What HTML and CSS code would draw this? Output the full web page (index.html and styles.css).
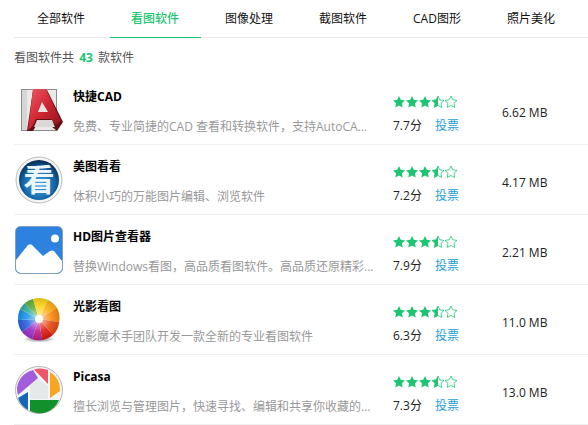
FILE: index.html
```html
<!DOCTYPE html>
<html lang="zh">
<head>
<meta charset="utf-8">
<title>看图软件</title>
<link rel="stylesheet" href="styles.css">
</head>
<body>
<svg class="defs" width="0" height="0" aria-hidden="true">
  <defs>
    <path id="star" d="M6 0l1.800 3.800 4.200.6-3 2.900.7 4.100L6 9.500l-3.700 1.900.7-4.100-3-2.900 4.200-.6z"/>
    <g id="stars">
      <use href="#star" x="0" fill="#1dc573"/>
      <use href="#star" x="13" fill="#1dc573"/>
      <use href="#star" x="26" fill="#1dc573"/>
      <use href="#star" x="39" fill="#fff" stroke="#1dc573" stroke-width=".8"/>
      <path d="M45 0v9.500l-3.700 1.900.7-4.100-3-2.900 4.200-.6z" fill="#1dc573"/>
      <use href="#star" x="52" fill="#fff" stroke="#1dc573" stroke-width=".8"/>
    </g>
  </defs>
</svg>
<nav class="tabs">
  <a class="tab">全部软件</a>
  <a class="tab active">看图软件</a>
  <a class="tab">图像处理</a>
  <a class="tab">截图软件</a>
  <a class="tab">CAD图形</a>
  <a class="tab">照片美化</a>
</nav>
<p class="count">看图软件共 <b>43</b> 款软件</p>
<ul class="list">
  <li class="row">
    <svg class="icon" viewBox="0 0 48 48">
      <defs>
        <linearGradient id="cadRed" x1="0" y1="0" x2="1" y2="1"><stop offset="0" stop-color="#ee5a66"/><stop offset=".5" stop-color="#cf2430"/><stop offset="1" stop-color="#8a121a"/></linearGradient>
      </defs>
      <rect x="6.500" y="3.500" width="35" height="41" fill="#e9e9e9" stroke="#8d8d8d"/>
      <rect x="7" y="4" width="5" height="40" fill="#d6d6d6"/>
      <path d="M18 4h14l16 32-6 9-6-5H21l-3 5h-6z" fill="#5e1116"/>
      <path d="M18 3h13l15 32-5 4-5-6H21l-4 8-4 3z" fill="url(#cadRed)"/>
      <path d="M27 16l6 10H23z" fill="#e8e4e4"/>
      <path d="M22 34h15l3 7H19z" fill="#dcd8d8"/>
    </svg>
    <div class="info">
      <h3 class="name">快捷CAD</h3>
      <p class="desc">免费、专业简捷的CAD 查看和转换软件，支持AutoCA...</p>
    </div>
    <div class="score">
      <svg class="stars" viewBox="0 0 64 12"><use href="#stars"/></svg>
      <div class="meta"><span class="num">7.7分</span><a class="vote">投票</a></div>
    </div>
    <div class="size">6.62 MB</div>
  </li>
  <li class="row">
    <svg class="icon" viewBox="0 0 48 48">
      <defs>
        <radialGradient id="mtBlue" cx=".5" cy=".6" r=".6"><stop offset="0" stop-color="#4aa8e4"/><stop offset=".65" stop-color="#1468aa"/><stop offset="1" stop-color="#08294f"/></radialGradient>
      </defs>
      <circle cx="24" cy="24" r="23" fill="#f4f4f4" stroke="#bdbdbd"/>
      <circle cx="24" cy="24" r="20" fill="url(#mtBlue)"/>
      <text class="kan" x="24" y="35" text-anchor="middle">看</text>
    </svg>
    <div class="info">
      <h3 class="name">美图看看</h3>
      <p class="desc">体积小巧的万能图片编辑、浏览软件</p>
    </div>
    <div class="score">
      <svg class="stars" viewBox="0 0 64 12"><use href="#stars"/></svg>
      <div class="meta"><span class="num">7.2分</span><a class="vote">投票</a></div>
    </div>
    <div class="size">4.17 MB</div>
  </li>
  <li class="row">
    <svg class="icon" viewBox="0 0 48 48">
      <rect x=".5" y=".5" width="47" height="47" rx="5" fill="#2c82de" stroke="#7f9fc0"/>
      <path d="M1 34L13 19q2-1.500 4 0l11 11 7-5q2-1 4 0l8 10v7a5 5 0 0 1-5 5H6a5 5 0 0 1-5-5z" fill="#fff"/>
      <circle cx="40" cy="12.500" r="4" fill="#fff"/>
    </svg>
    <div class="info">
      <h3 class="name">HD图片查看器</h3>
      <p class="desc">替换Windows看图，高品质看图软件。高品质还原精彩...</p>
    </div>
    <div class="score">
      <svg class="stars" viewBox="0 0 64 12"><use href="#stars"/></svg>
      <div class="meta"><span class="num">7.9分</span><a class="vote">投票</a></div>
    </div>
    <div class="size">2.21 MB</div>
  </li>
  <li class="row">
    <svg class="icon" viewBox="0 0 48 48">
      <defs>
        <radialGradient id="gs" cx=".5" cy=".5" r=".5"><stop offset="0" stop-color="#666"/><stop offset="1" stop-color="#fff"/></radialGradient>
        <radialGradient id="gloss" cx=".5" cy=".5" r=".5"><stop offset=".15" stop-color="#fff" stop-opacity=".55"/><stop offset=".6" stop-color="#fff" stop-opacity=".1"/><stop offset="1" stop-color="#000" stop-opacity=".12"/></radialGradient>
      </defs>
      <ellipse cx="24" cy="43" rx="16" ry="3.500" fill="url(#gs)"/>
      <path d="M24 23L10 7a21 21 0 0 1 8-4z" fill="#5fb03a"/>
      <path d="M24 23L18 3a21 21 0 0 1 15 1z" fill="#fbd319"/>
      <path d="M24 23l9-19a21 21 0 0 1 9 8z" fill="#fcae13"/>
      <path d="M24 23l18-11a21 21 0 0 1 2 14z" fill="#f9860c"/>
      <path d="M24 23l20 3a21 21 0 0 1-6 13z" fill="#e8470f"/>
      <path d="M24 23l14 16a21 21 0 0 1-11 5z" fill="#d81a10"/>
      <path d="M24 23l3 21a21 21 0 0 1-10-1z" fill="#bd1e8c"/>
      <path d="M24 23L17 43a21 21 0 0 1-10-7z" fill="#9a30cc"/>
      <path d="M24 23L7 36a21 21 0 0 1-4-12z" fill="#2a60e0"/>
      <path d="M24 23L3 24a21 21 0 0 1 2-11z" fill="#1a94ea"/>
      <path d="M24 23L5 13a21 21 0 0 1 5-6z" fill="#3cb0a0"/>
      <circle cx="24" cy="23" r="21" fill="url(#gloss)"/>
      <circle cx="24" cy="23" r="4" fill="#fff"/>
    </svg>
    <div class="info">
      <h3 class="name">光影看图</h3>
      <p class="desc">光影魔术手团队开发一款全新的专业看图软件</p>
    </div>
    <div class="score">
      <svg class="stars" viewBox="0 0 64 12"><use href="#stars"/></svg>
      <div class="meta"><span class="num">6.3分</span><a class="vote">投票</a></div>
    </div>
    <div class="size">11.0 MB</div>
  </li>
  <li class="row">
    <svg class="icon" viewBox="0 0 48 48">
      <circle cx="24" cy="24" r="23.500" fill="#f6f6f6" stroke="#b5b5b5"/>
      <path d="M23 12l10 8v13H15V19z" fill="#e6e9e9"/>
      <path d="M19 3.500a21 21 0 0 1 14 .5v14z" fill="#f0566a"/>
      <path d="M35 6a21 21 0 0 1 10 19l-10 7z" fill="#f9a51f"/>
      <path d="M15 34h29a21 21 0 0 1-29 11z" fill="#12902c"/>
      <path d="M13 26v18a21 21 0 0 1-10-12z" fill="#1666b5"/>
      <path d="M18 4L23 12 3 29a21 21 0 0 1-1-7 21 21 0 0 1 16-18z" fill="#a25ddc"/>
    </svg>
    <div class="info">
      <h3 class="name">Picasa</h3>
      <p class="desc">擅长浏览与管理图片，快速寻找、编辑和共享你收藏的...</p>
    </div>
    <div class="score">
      <svg class="stars" viewBox="0 0 64 12"><use href="#stars"/></svg>
      <div class="meta"><span class="num">7.3分</span><a class="vote">投票</a></div>
    </div>
    <div class="size">13.0 MB</div>
  </li>
</ul>
</body>
</html>
```
FILE: styles.css
```css
html, body { margin: 0; padding: 0; background: #fff; overflow: hidden; }
body {
  width: 588px;
  height: 425px;
  font-family: "Open Sans", "Noto Sans CJK SC", sans-serif;
  font-size: 12px;
  color: #222;
  padding-left: 14px;
  box-sizing: border-box;
}
.defs { position: absolute; }
.tabs {
  display: grid;
  grid-template-columns: repeat(6, 94px);
  height: 38px;
  box-sizing: border-box;
  border-bottom: 1px solid #ebebeb;
}
.tab {
  height: 38px;
  line-height: 38px;
  text-align: center;
  box-sizing: border-box;
  margin: 0 1.5px;
  color: #111;
}
.tab.active {
  color: #1dc573;
  font-weight: 500;
  border-bottom: 1px solid #1dc573;
}
.count {
  margin: 0;
  height: 37px;
  line-height: 40px;
  color: #555;
}
.count b { color: #1dc573; margin: 0 2px; }
.list { list-style: none; margin: 0; padding: 0; }
.row {
  height: 70px;
  box-sizing: border-box;
  border-bottom: 1px solid #f0f0f0;
  display: flex;
  align-items: center;
}
.icon { width: 48px; height: 48px; margin: 0 10px 0 1px; flex: none; display: block; }
.info { width: 320px; flex: none; align-self: flex-start; padding-top: 10px; }
.name {
  margin: 0;
  font-size: 12px;
  line-height: 24px;
  font-weight: 700;
  color: #000;
}
.desc {
  margin: 6px 0 0;
  line-height: 24px;
  color: #999;
  white-space: nowrap;
}
.score { width: 109px; flex: none; align-self: flex-start; padding-top: 21px; }
.stars { display: block; width: 64px; height: 12px; overflow: visible; }
.meta { display: flex; margin-top: 8px; line-height: 20px; }
.num { width: 42px; color: #222; }
.vote { color: #2a9fd8; }
.size { color: #222; margin-top: 6px; }
.kan { font-family: "Noto Sans CJK SC", sans-serif; font-size: 31px; font-weight: 700; fill: #eef6fd; }
```
